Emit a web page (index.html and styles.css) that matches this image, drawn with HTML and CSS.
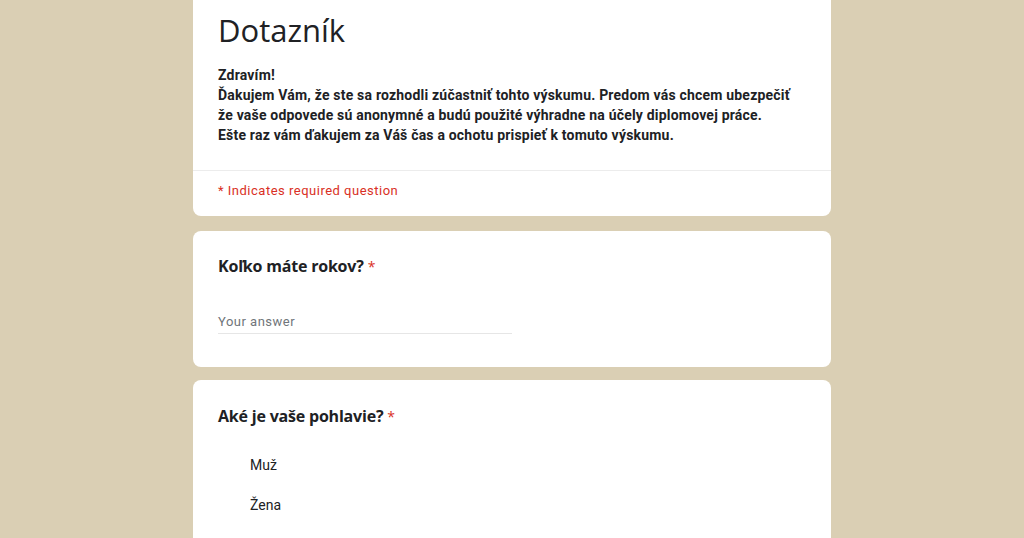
FILE: index.html
```
<!DOCTYPE html>
<html lang="sk">
<head>
<meta charset="utf-8">
<title>Dotazník</title>
<link rel="stylesheet" href="styles.css">
</head>
<body>
<main class="form">
  <section class="card card-head">
    <div class="head-main">
      <h1 class="title">Dotazník</h1>
      <div class="desc">
        <div>Zdravím!</div>
        <div>Ďakujem Vám, že ste sa rozhodli zúčastniť tohto výskumu. Predom vás chcem ubezpečiť</div>
        <div>že vaše odpovede sú anonymné a budú použité výhradne na účely diplomovej práce.</div>
        <div>Ešte raz vám ďakujem za Váš čas a ochotu prispieť k tomuto výskumu.</div>
      </div>
    </div>
    <div class="required-note">* Indicates required question</div>
  </section>

  <section class="card card-q">
    <div class="question">Koľko máte rokov? <span class="req">*</span></div>
    <div class="answer"><span class="placeholder">Your answer</span></div>
  </section>

  <section class="card card-q card-choice">
    <div class="question">Aké je vaše pohlavie? <span class="req">*</span></div>
    <div class="options">
      <div class="option">Muž</div>
      <div class="option">Žena</div>
    </div>
  </section>
</main>
</body>
</html>
```
FILE: styles.css
```
html, body {
  margin: 0;
  padding: 0;
  background: #dacfb4;
  height: 100%;
  overflow: hidden;
}
body {
  font-family: Roboto, "Liberation Sans", Arial, sans-serif;
  color: #202124;
}
.form {
  width: 638px;
  margin: 0 auto;
  display: flex;
  flex-direction: column;
  gap: 13px;
}
.card {
  background: #fff;
  border-radius: 8px;
}
.card-head {
  border-radius: 0 0 8px 8px;
  margin-bottom: 2px;
}
.head-main {
  padding: 10px 24px 25px 25px;
  border-bottom: 1px solid #ececec;
}
.title {
  margin: 0;
  font-size: 31px;
  line-height: 40px;
  font-weight: 400;
  font-family: "Open Sans", Roboto, sans-serif;
}
.desc {
  margin-top: 15px;
  font-size: 14px;
  line-height: 20px;
  font-weight: 700;
  letter-spacing: 0.2px;
  color: #202124;
}
.required-note {
  padding: 10px 25px 15px;
  font-size: 13px;
  line-height: 20px;
  letter-spacing: 0.5px;
  color: #d93025;
}
.card-q {
  padding: 23px 25px 33px;
}
.question {
  font-size: 16px;
  line-height: 24px;
  font-weight: 700;
  font-family: "Open Sans", Roboto, sans-serif;
  letter-spacing: -0.2px;
}
.req {
  color: #d93025;
  font-weight: 400;
  font-size: 14px;
}
.answer {
  margin-top: 30px;
  width: 294px;
  height: 24px;
  border-bottom: 1px solid #e6e6e6;
  display: flex;
  align-items: center;
}
.placeholder {
  font-size: 13px;
  letter-spacing: 0.5px;
  color: #70757a;
}
.card-choice {
  padding: 24px 25px 20px;
}
.options {
  margin-top: 16px;
  padding-left: 32px;
}
.option {
  height: 40px;
  line-height: 40px;
  font-size: 14px;
}
```
